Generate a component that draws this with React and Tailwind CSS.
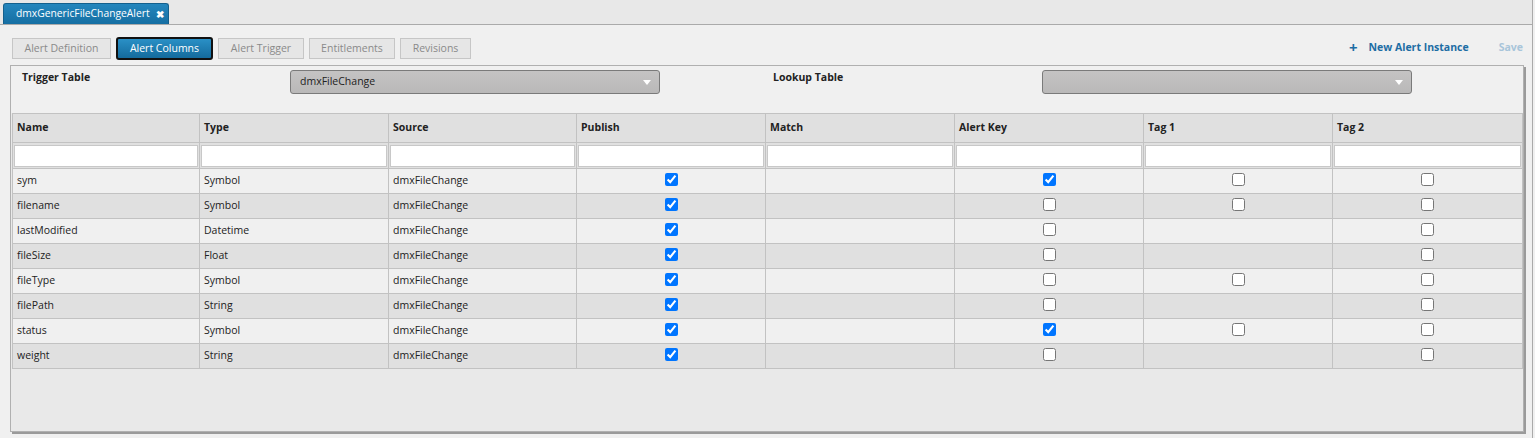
import React from 'react';

const columns = [
  { label: 'Name', w: 'w-[187px]' },
  { label: 'Type', w: 'w-[189px]' },
  { label: 'Source', w: 'w-[188px]' },
  { label: 'Publish', w: 'w-[189px]' },
  { label: 'Match', w: 'w-[189px]' },
  { label: 'Alert Key', w: 'w-[189px]' },
  { label: 'Tag 1', w: 'w-[189px]' },
  { label: 'Tag 2', w: 'w-[190px]' },
];

// tag1: null means no checkbox in the cell
const rows = [
  { name: 'sym', type: 'Symbol', key: true, tag1: false },
  { name: 'filename', type: 'Symbol', key: false, tag1: false },
  { name: 'lastModified', type: 'Datetime', key: false, tag1: null },
  { name: 'fileSize', type: 'Float', key: false, tag1: null },
  { name: 'fileType', type: 'Symbol', key: false, tag1: false },
  { name: 'filePath', type: 'String', key: false, tag1: null },
  { name: 'status', type: 'Symbol', key: true, tag1: false },
  { name: 'weight', type: 'String', key: false, tag1: null },
];

const subTabs = [
  { label: 'Alert Definition', w: 'w-[99px]' },
  { label: 'Alert Columns', w: 'w-[97px]', active: true },
  { label: 'Alert Trigger', w: 'w-[86px]' },
  { label: 'Entitlements', w: 'w-[86px]' },
  { label: 'Revisions', w: 'w-[71px]' },
];

function Check({ on }) {
  return (
    <input
      type="checkbox"
      checked={on}
      readOnly
      className="m-0 mb-[4px] w-[13px] h-[13px] align-middle"
    />
  );
}

function Select({ value }) {
  return (
    <div className="w-[370px] h-[24px] rounded-[3px] border border-[#7a7a7a] bg-gradient-to-b from-[#c4c3c3] to-[#b9b8b8] flex items-center justify-between pl-[9px] pr-[8px] text-[#222]">
      <span>{value}</span>
      <span className="w-0 h-0 border-l-[4px] border-r-[4px] border-t-[5px] border-l-transparent border-r-transparent border-t-white" />
    </div>
  );
}

export default function App() {
  return (
    <div className="w-[1535px] h-[438px] bg-[#f0f0f0] font-['Open_Sans',sans-serif] text-[10.5px] text-[#222] overflow-hidden">
      <div className="w-[1533px] h-[438px] border-r border-[#aaa] flex flex-col">
        {/* tab strip */}
        <div className="h-[25px] bg-[#e8e8e8] border-b border-[#aaa] pl-[3px] pt-[3px] flex">
          <div className="w-[166px] h-[21px] bg-gradient-to-b from-[#2486bd] to-[#166fa3] border border-[#14608d] border-b-0 rounded-t-[3px] text-white flex items-center pl-[12px] gap-[6px] text-[10.3px]">
            <span>dmxGenericFileChangeAlert</span>
            <span className="text-[10px] font-bold leading-none">✖</span>
          </div>
        </div>

        {/* sub tabs + actions */}
        <div className="h-[40px] flex items-start pt-[13px] pl-[12px] pr-[9px]">
          <div className="flex gap-[5px]">
            {subTabs.map((t) =>
              t.active ? (
                <div
                  key={t.label}
                  className={`${t.w} h-[23px] -mt-[1px] rounded-[3px] border-2 border-[#111] bg-gradient-to-b from-[#2a90c6] to-[#146b9d] text-white flex items-center justify-center`}
                >
                  {t.label}
                </div>
              ) : (
                <div
                  key={t.label}
                  className={`${t.w} h-[21px] border border-[#c6c6c6] bg-[#e6e6e6] text-[#8a8a8a] flex items-center justify-center`}
                >
                  {t.label}
                </div>
              )
            )}
          </div>
          <div className="ml-auto flex items-center gap-[30px] pt-[2px]">
            <div className="flex items-center gap-[11px] font-bold text-[#1d6da4]">
              <span className="text-[15px] leading-none">+</span>
              <span>New Alert Instance</span>
            </div>
            <span className="font-bold text-[#a8c5da]">Save</span>
          </div>
        </div>

        {/* main panel */}
        <div className="ml-[10px] w-[1514px] h-[367px] border border-[#b0b0b0] shadow-[2px_2px_0_#9a9a9a] bg-[#e9e9e9] flex flex-col">
          <div className="h-[47px] bg-[#f0f0f0] flex items-start pt-[4px]">
            <div className="w-[279px] pl-[11px] font-bold">Trigger Table</div>
            <Select value="dmxFileChange" />
            <div className="w-[382px] pl-[113px] font-bold">Lookup Table</div>
            <Select value="" />
          </div>

          <table className="ml-[1px] w-[1510px] table-fixed border-collapse">
            <colgroup>
              {columns.map((c) => (
                <col key={c.label} className={c.w} />
              ))}
            </colgroup>
            <thead>
              <tr className="h-[29px] bg-[#e0e0e0]">
                {columns.map((c) => (
                  <th key={c.label} className="border border-[#c2c2c2] text-left font-bold pl-[4px] align-middle">
                    {c.label}
                  </th>
                ))}
              </tr>
              <tr className="h-[26px] bg-[#e0e0e0]">
                {columns.map((c) => (
                  <th key={c.label} className="border border-[#c2c2c2] p-[1px]">
                    <input className="block w-full h-[22px] bg-white border border-[#c8c8c8]" readOnly />
                  </th>
                ))}
              </tr>
            </thead>
            <tbody>
              {rows.map((r, i) => (
                <tr key={r.name} className={`h-[25px] ${i % 2 ? 'bg-[#e0e0e0]' : 'bg-[#f0f0f0]'}`}>
                  <td className="border border-[#c2c2c2] pl-[4px] pb-[1px]">{r.name}</td>
                  <td className="border border-[#c2c2c2] pl-[4px] pb-[1px]">{r.type}</td>
                  <td className="border border-[#c2c2c2] pl-[4px] pb-[1px]">dmxFileChange</td>
                  <td className="border border-[#c2c2c2] text-center"><Check on /></td>
                  <td className="border border-[#c2c2c2]"></td>
                  <td className="border border-[#c2c2c2] text-center"><Check on={r.key} /></td>
                  <td className="border border-[#c2c2c2] text-center">
                    {r.tag1 !== null && <Check on={false} />}
                  </td>
                  <td className="border border-[#c2c2c2] text-center"><Check on={false} /></td>
                </tr>
              ))}
            </tbody>
          </table>
        </div>
      </div>
    </div>
  );
}
